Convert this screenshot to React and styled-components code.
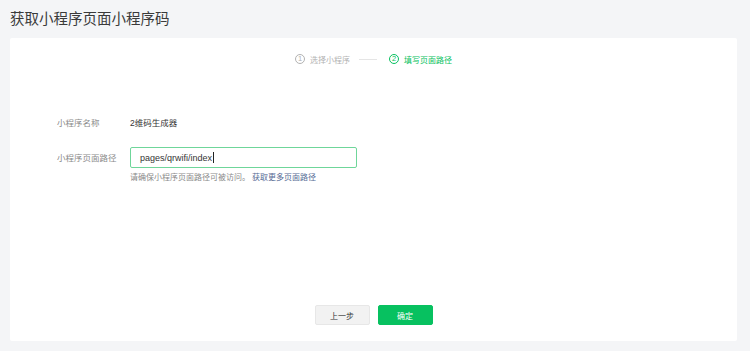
import styled, { createGlobalStyle } from "styled-components";

const GlobalStyle = createGlobalStyle`
  html, body {
    margin: 0;
    padding: 0;
    background: #f4f5f7;
  }
  body {
    font-family: "Liberation Sans", "Noto Sans CJK SC", sans-serif;
    color: #353535;
  }
`;

const Page = styled.div`
  height: 351px;
  box-sizing: border-box;
  padding: 0 13px 10px 10px;
  display: flex;
  flex-direction: column;
`;

const Title = styled.h1`
  margin: 0;
  padding-top: 9px;
  height: 38px;
  box-sizing: border-box;
  font-size: 14.5px;
  line-height: 20px;
  font-weight: normal;
  color: #3a3a3a;
`;

const Card = styled.div`
  flex: 1;
  background: #fff;
  border-radius: 2px;
  display: flex;
  flex-direction: column;
  padding: 15px 0 16px;
  box-sizing: border-box;
`;

const Steps = styled.div`
  display: flex;
  justify-content: center;
  align-items: center;
  height: 12px;
  font-size: 8px;
`;

const Step = styled.div`
  display: flex;
  align-items: center;
  gap: 5px;
  color: ${(p) => (p.$active ? "#07c160" : "#b2b2b2")};
`;

const StepNum = styled.span`
  width: 10px;
  height: 10px;
  box-sizing: border-box;
  border-radius: 50%;
  border: 1px solid currentColor;
  display: flex;
  align-items: center;
  justify-content: center;
  font-size: 7.5px;
  line-height: 1;
`;

const StepLine = styled.span`
  width: 18px;
  height: 1px;
  background: #e5e5e5;
  margin: 0 12px 0 9px;
`;

const Form = styled.div`
  margin-top: 50px;
  padding-left: 47px;
  display: flex;
  flex-direction: column;
`;

const Row = styled.div`
  display: flex;
  align-items: ${(p) => (p.$top ? "flex-start" : "center")};
  margin-bottom: ${(p) => p.$gap || 0}px;
`;

const Label = styled.div`
  width: 73px;
  flex-shrink: 0;
  font-size: 8.5px;
  color: #8a8a8a;
  line-height: 16px;
  padding-top: ${(p) => p.$pad || 0}px;
`;

const Value = styled.div`
  font-size: 8.5px;
  line-height: 16px;
  color: #353535;
`;

const Field = styled.div`
  display: flex;
  flex-direction: column;
`;

const Input = styled.div`
  width: 227px;
  height: 21px;
  box-sizing: border-box;
  border: 1px solid #6fd69a;
  border-radius: 2px;
  padding: 0 9px;
  display: flex;
  align-items: center;
  font-size: 9px;
  color: #353535;
`;

const Caret = styled.span`
  display: inline-block;
  width: 1px;
  height: 11px;
  background: #222;
  margin-left: 1px;
`;

const Hint = styled.div`
  margin-top: 4px;
  font-size: 8px;
  line-height: 12px;
  color: #8a8a8a;
`;

const Link = styled.a`
  color: #576b95;
  text-decoration: none;
  margin-left: 2px;
`;

const Footer = styled.div`
  margin-top: auto;
  display: flex;
  justify-content: center;
  gap: 8px;
`;

const Button = styled.button`
  width: 55px;
  height: 20px;
  box-sizing: border-box;
  border-radius: 2px;
  font-family: inherit;
  font-size: 8px;
  padding: 0;
  cursor: pointer;
  border: 1px solid ${(p) => (p.$primary ? "#07c160" : "#e7e7e7")};
  background: ${(p) => (p.$primary ? "#07c160" : "#f2f2f2")};
  color: ${(p) => (p.$primary ? "#fff" : "#353535")};
`;

export default function App() {
  return (
    <>
      <GlobalStyle />
      <Page>
        <Title>获取小程序页面小程序码</Title>
        <Card>
          <Steps>
            <Step>
              <StepNum>1</StepNum>
              选择小程序
            </Step>
            <StepLine />
            <Step $active>
              <StepNum>2</StepNum>
              填写页面路径
            </Step>
          </Steps>
          <Form>
            <Row $gap={16}>
              <Label>小程序名称</Label>
              <Value>2维码生成器</Value>
            </Row>
            <Row $top>
              <Label $pad={3}>小程序页面路径</Label>
              <Field>
                <Input>
                  pages/qrwifi/index
                  <Caret />
                </Input>
                <Hint>
                  请确保小程序页面路径可被访问。
                  <Link href="#">获取更多页面路径</Link>
                </Hint>
              </Field>
            </Row>
          </Form>
          <Footer>
            <Button>上一步</Button>
            <Button $primary>确定</Button>
          </Footer>
        </Card>
      </Page>
    </>
  );
}
